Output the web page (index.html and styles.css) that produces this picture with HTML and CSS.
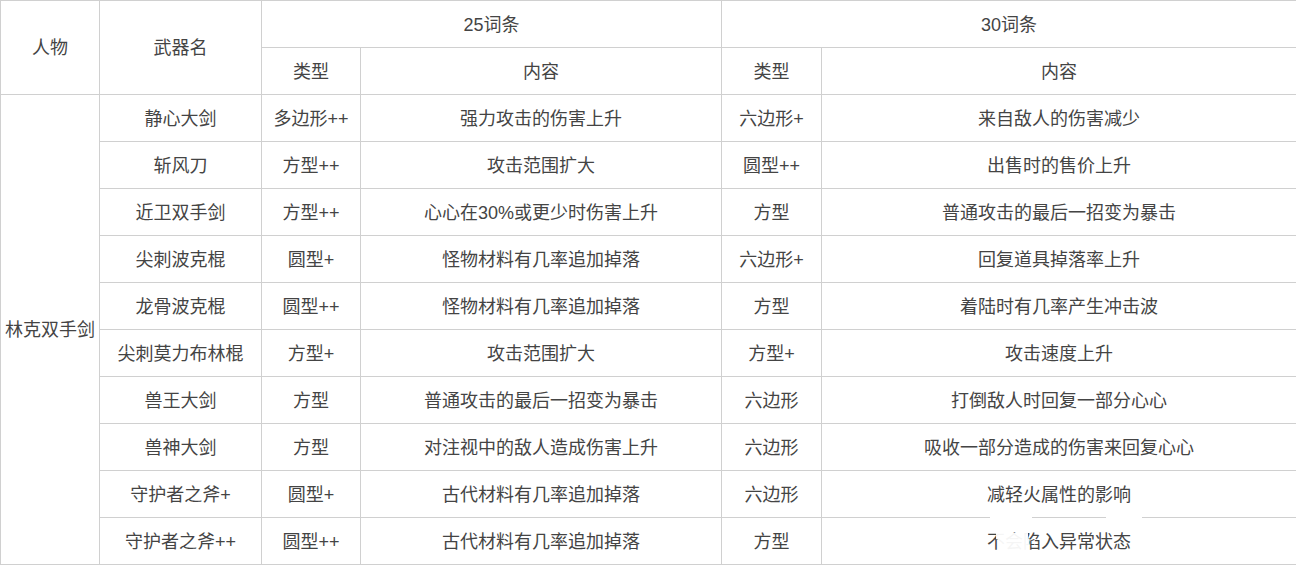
FILE: index.html
```html
<!DOCTYPE html>
<html lang="zh">
<head>
<meta charset="utf-8">
<title>林克双手剑 词条</title>
<link rel="stylesheet" href="styles.css">
</head>
<body>
<div class="wrap">
<table class="grid">
  <colgroup>
    <col class="c1"><col class="c2"><col class="c3"><col class="c4"><col class="c5"><col class="c6">
  </colgroup>
  <thead>
    <tr>
      <th rowspan="2">人物</th>
      <th rowspan="2">武器名</th>
      <th colspan="2">25词条</th>
      <th colspan="2">30词条</th>
    </tr>
    <tr>
      <th>类型</th><th>内容</th><th>类型</th><th>内容</th>
    </tr>
  </thead>
  <tbody>
    <tr><td rowspan="10">林克双手剑</td><td>静心大剑</td><td>多边形++</td><td>强力攻击的伤害上升</td><td>六边形+</td><td>来自敌人的伤害减少</td></tr>
    <tr><td>斩风刀</td><td>方型++</td><td>攻击范围扩大</td><td>圆型++</td><td>出售时的售价上升</td></tr>
    <tr><td>近卫双手剑</td><td>方型++</td><td>心心在30%或更少时伤害上升</td><td>方型</td><td>普通攻击的最后一招变为暴击</td></tr>
    <tr><td>尖刺波克棍</td><td>圆型+</td><td>怪物材料有几率追加掉落</td><td>六边形+</td><td>回复道具掉落率上升</td></tr>
    <tr><td>龙骨波克棍</td><td>圆型++</td><td>怪物材料有几率追加掉落</td><td>方型</td><td>着陆时有几率产生冲击波</td></tr>
    <tr><td>尖刺莫力布林棍</td><td>方型+</td><td>攻击范围扩大</td><td>方型+</td><td>攻击速度上升</td></tr>
    <tr><td>兽王大剑</td><td>方型</td><td>普通攻击的最后一招变为暴击</td><td>六边形</td><td>打倒敌人时回复一部分心心</td></tr>
    <tr><td>兽神大剑</td><td>方型</td><td>对注视中的敌人造成伤害上升</td><td>六边形</td><td>吸收一部分造成的伤害来回复心心</td></tr>
    <tr><td>守护者之斧+</td><td>圆型+</td><td>古代材料有几率追加掉落</td><td>六边形</td><td>减轻火属性的影响</td></tr>
    <tr><td>守护者之斧++</td><td>圆型++</td><td>古代材料有几率追加掉落</td><td>方型</td><td>不会陷入异常状态</td></tr>
  </tbody>
</table>
<div class="wm wm-a"></div>
<div class="wm wm-b"></div>
<div class="wm wm-c"></div>
<div class="wm wm-d"></div>
</div>
</body>
</html>
```

FILE: styles.css
```css
html, body {
  margin: 0;
  padding: 0;
  background: #fff;
}

.wrap {
  position: relative;
  width: 1296px;
}

.grid {
  border-collapse: collapse;
  table-layout: fixed;
  width: 1296px;
  font-family: "Liberation Sans", "Noto Sans CJK SC", sans-serif;
  font-size: 18px;
  color: #444;
}

.c1 { width: 99px; }
.c2 { width: 162px; }
.c3 { width: 99px; }
.c4 { width: 361px; }
.c5 { width: 100px; }
.c6 { width: 475px; }

.grid th,
.grid td {
  border: 1px solid #d0d0d0;
  height: 45px;
  padding: 1px 0 0;
  text-align: center;
  vertical-align: middle;
  font-weight: normal;
  line-height: 20px;
  white-space: nowrap;
}

/* watermark remnants over the bottom-right */
.wm {
  position: absolute;
  background: #fff;
}
.wm-a { left: 990px; top: 515px; width: 42px; height: 5px; }
.wm-b { left: 1106px; top: 515px; width: 36px; height: 5px; }
.wm-c { left: 996px; top: 533px; width: 32px; height: 6px; opacity: 0.95; }
.wm-d { left: 998px; top: 539px; width: 31px; height: 14px; opacity: 0.95; }
```
